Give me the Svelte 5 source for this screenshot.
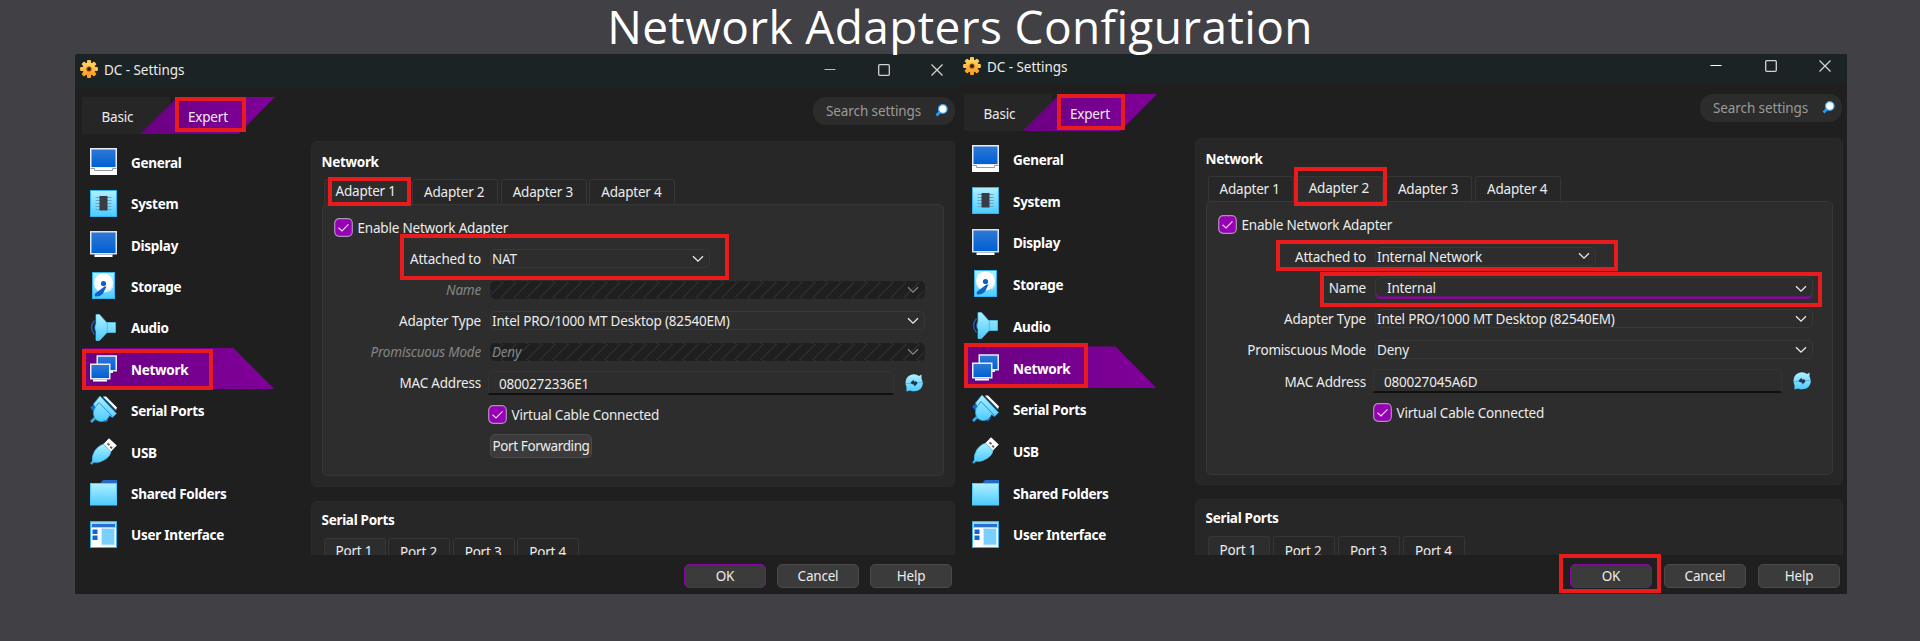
<script>
  const sections = ['General', 'System', 'Display', 'Storage', 'Audio', 'Network', 'Serial Ports', 'USB', 'Shared Folders', 'User Interface'];

  const windows = [
    {
      id: 'first',
      active: 1,
      mac: '0800272336E1',
      forwarding: true,
      rows: [
        { label: 'Attached to', value: 'NAT', kind: 'short' },
        { label: 'Name', value: '', kind: 'disabled' },
        { label: 'Adapter Type', value: 'Intel PRO/1000 MT Desktop (82540EM)', kind: 'wide' },
        { label: 'Promiscuous Mode', value: 'Deny', kind: 'disabled' }
      ]
    },
    {
      id: 'second',
      active: 2,
      mac: '080027045A6D',
      forwarding: false,
      rows: [
        { label: 'Attached to', value: 'Internal Network', kind: 'short' },
        { label: 'Name', value: 'Internal', kind: 'editable' },
        { label: 'Adapter Type', value: 'Intel PRO/1000 MT Desktop (82540EM)', kind: 'wide' },
        { label: 'Promiscuous Mode', value: 'Deny', kind: 'wide' }
      ]
    }
  ];

  // Highlight frames drawn over the windows: x, y, width, height
  const marks = [
    [175, 97, 71, 35],
    [328, 177, 83, 29],
    [400, 234, 329, 46],
    [82, 349, 131, 41],
    [1057, 94, 68, 36],
    [1294, 167, 93, 39],
    [1276, 240, 342, 31],
    [1320, 272, 502, 35],
    [964, 343, 124, 45],
    [1559, 554, 102, 39]
  ];
</script>

{#snippet chevron()}
  <svg class="chevron" viewBox="0 0 12 8" width="12" height="8"><path d="M1 1.2 6 6.2 11 1.2" fill="none" stroke="currentColor" stroke-width="1.3" /></svg>
{/snippet}

{#snippet check()}
  <svg class="check" viewBox="0 0 19 19" width="19" height="19">
    <rect x=".7" y=".7" width="17.6" height="17.6" rx="4.5" fill="#9600b4" stroke="#b08fbb" stroke-width="1.2" />
    <path d="M4.5 9.8 8 13 14.5 6.3" fill="none" stroke="#f0d8f5" stroke-width="1.2" />
  </svg>
{/snippet}

{#snippet icon(name)}
  <svg class="icon" viewBox="0 0 27 27" width="27" height="27">
    {#if name === 'General'}
      <path d="M0 0H27V27H0Z" fill="#e9edf2" />
      <path d="M1.5 1.5H25.5V19H1.5Z" fill="url(#screen)" />
      <path d="M0 20H27V27H0Z" fill="#fff" />
      <path d="M.5 20.5H4.500V22.500H22.500V20.500H26.500" fill="none" stroke="#9a9a9a" />
    {:else if name === 'System'}
      <rect x=".5" y=".5" width="26" height="26" fill="url(#ice)" stroke="#36b3ee" />
      <path d="M5.500 7.500H21.500M5.500 10.500H21.500M5.500 13.500H21.500M5.500 16.500H21.500M5.500 19.500H21.500" stroke="#6fa3b8" stroke-width="1.200" />
      <rect x="9.500" y="6" width="8" height="14.500" fill="#373c47" />
    {:else if name === 'Display'}
      <path d="M0 0H27V23.500H0Z" fill="#dde3ec" />
      <path d="M1.500 1.500H25.500V22H1.500Z" fill="url(#screen)" />
      <path d="M4.500 23.500H22.500V26H4.500Z" fill="#fff" />
    {:else if name === 'Storage'}
      <rect x="2.500" y=".5" width="22" height="26" fill="url(#ice)" stroke="#36b3ee" />
      <circle cx="13.500" cy="11" r="9.500" fill="#fff" />
      <path d="M16.500 14.500 13 21.500Q10 25 5 24.500 4 22 6.500 20.500L14.500 14.500Z" fill="#0b60ca" />
      <circle cx="13.500" cy="11.500" r="2.600" fill="#0b60ca" />
      <path d="M17 16.500 20 18.500 23 14" fill="none" stroke="#c9f2ff" stroke-width="1.500" />
    {:else if name === 'Audio'}
      <path d="M4.500 6.500Q-1.500 13.500 4.500 20.500M6 9.500Q3.500 13.500 6 17" fill="none" stroke="#1b5fb0" stroke-width="1.400" />
      <path d="M6 .5 9.500 .5 17 9V8.500H25.500V18.500H17L9.500 26.500H6V17Q4.500 13.500 6 10Z" fill="url(#ice)" stroke="#55cdf8" stroke-width=".7" />
      <path d="M17.300 9V18.500" stroke="#47bdf3" />
    {:else if name === 'Network'}
      <path d="M6.500 .3H27V16.500H23V18H20V16H6.500Z" fill="#e9edf2" />
      <path d="M8 1.800H25.500V15H8Z" fill="url(#screen)" />
      <path d="M0 8.500H20.500V24.500H0Z" fill="#e9edf2" />
      <path d="M1.500 10H19V23H1.500Z" fill="url(#screen)" />
      <path d="M3 24.500H17V26.500H3Z" fill="#fff" />
    {:else if name === 'Serial Ports'}
      <path d="M1 26 5 22" stroke="#38aef0" stroke-width="2.500" />
      <path d="M0 11.500 4 8.500 6 11 3 15Z" fill="#1168cf" />
      <path d="M13 24 17 21.500 18.500 24 15.500 26.500Z" fill="#1168cf" />
      <path d="M10 0 26.500 17.500 22.500 21.500 19.500 19.500Q17 25.500 10.500 25.500 3.500 24.500 3.500 17 3.500 13 5.500 11.500L3.500 8Z" fill="url(#ice)" stroke="#2ba3e8" stroke-width=".8" />
      <path d="M13 .5 16 .5 27 11.500 26 14Z" fill="#fff" />
      <path d="M6 10.500 9 6.500 22.500 20.500M13 1 26 14.500" fill="none" stroke="#2a8ad8" stroke-width="1" />
    {:else if name === 'USB'}
      <path d="M1 26 5 21.500" stroke="#38aef0" stroke-width="2.300" />
      <path d="M14 7 21 13.500Q20.500 18 15 21.500 9.500 25.500 2.500 24 1.500 18 5 12.500 9 7 14 6Z" fill="url(#ice)" stroke="#48c3f5" stroke-width=".7" />
      <path d="M13.500 6 19 .3 26.800 7.500 21 13.500Z" fill="#fff" />
      <path d="M17.500 5.500 19.500 7M20.300 8.700 22 10.300" stroke="#555" stroke-width="1.800" />
    {:else if name === 'Shared Folders'}
      <path d="M10.500 4 13 1H27V7H8Z" fill="#226bcb" />
      <rect x=".5" y="4.500" width="26" height="21.500" fill="url(#ice)" stroke="#55cbf8" />
    {:else}
      <rect x=".5" y=".5" width="26" height="26" fill="#fff" stroke="#36b3ee" />
      <path d="M1 1H26V7H1Z" fill="#8bddfb" />
      <path d="M2 3H25V6H2Z" fill="#2a6fce" />
      <path d="M2.500 8.500H7.500V13H2.500ZM2.500 14.500H7.500V19H2.500Z" fill="#0d67d8" />
      <rect x="11.500" y="7.500" width="13" height="16.500" fill="#79d0ff" stroke="#c9ebff" />
    {/if}
  </svg>
{/snippet}

<svg class="defs" width="0" height="0" aria-hidden="true">
  <defs>
    <linearGradient id="screen" x1="0" y1="0" x2="0" y2="1"><stop offset="0" stop-color="#2f78d4" /><stop offset="1" stop-color="#0060d4" /></linearGradient>
    <linearGradient id="ice" x1="0" y1="0" x2="0" y2="1"><stop offset="0" stop-color="#b0f0ff" /><stop offset="1" stop-color="#4ccbff" /></linearGradient>
    <linearGradient id="violet" x1="0" y1="0" x2="1" y2="0"><stop offset="0" stop-color="#6b0082" /><stop offset="1" stop-color="#80009a" /></linearGradient>
    <linearGradient id="gold" x1="0" y1="0" x2="0" y2="1"><stop offset="0" stop-color="#ffd76a" /><stop offset="1" stop-color="#ff9d1e" /></linearGradient>
  </defs>
</svg>

<main>
  <h1>Network Adapters Configuration</h1>

  <div class="desk">
    {#each windows as win}
      <section class="window {win.id}">
        <header class="titlebar">
          <svg class="gear" viewBox="-9 -9 18 18" width="18" height="18">
            {#each [0, 45, 90, 135, 180, 225, 270, 315] as angle}
              <rect x="-2" y="-8.900" width="4" height="5" rx="1" fill={angle > 90 && angle < 270 ? '#ffa126' : '#ffc652'} transform="rotate({angle})" />
            {/each}
            <circle r="6.500" fill="url(#gold)" />
            <circle r="2.600" fill="#8b4a12" />
            <circle r="1.500" fill="#241a18" />
          </svg>
          <span class="caption">DC - Settings</span>
          <div class="controls">
            <svg viewBox="0 0 12 12" width="12" height="12"><path d="M.5 5.500H11.500" stroke={win.id === 'second' ? '#fff' : '#b9bdbe'} /></svg>
            <svg viewBox="0 0 12 12" width="12" height="12"><rect x=".7" y=".7" width="10.600" height="10.600" rx="1" fill="none" stroke="#d0d3d3" stroke-width="1.300" /></svg>
            <svg viewBox="0 0 12 12" width="12" height="12"><path d="M.5 .5 11.500 11.500M11.500 .5 .5 11.500" stroke="#d6d8d8" stroke-width="1.200" /></svg>
          </div>
        </header>

        <div class="toolbar">
          <div class="modes">
            <svg viewBox="0 0 193 37" width="193" height="37"><path d="M58.500 37 96 0H193L156.500 37Z" fill="url(#violet)" /></svg>
            <span class="basic">Basic</span>
            <span class="expert">Expert</span>
          </div>
          <div class="search">
            <span>Search settings</span>
            <svg viewBox="0 0 13 13" width="13" height="13"><path d="M1.500 11.500 5 8" stroke="#2b9df0" stroke-width="2.600" /><circle cx="7.800" cy="5" r="4.300" fill="#fff" stroke="#3ba3f5" stroke-width="1.300" /></svg>
          </div>
        </div>

        <div class="body">
          <nav>
            {#each sections as name}
              <div class="item" class:selected={name === 'Network'}>{@render icon(name)}<span>{name}</span></div>
            {/each}
          </nav>

          <div class="content">
            <div class="panel network">
              <h2>Network</h2>
              <div class="tabs">
                {#each [1, 2, 3, 4] as n}
                  <div class="tab" class:active={n === win.active}>Adapter {n}</div>
                {/each}
              </div>
              <div class="page">
                <div class="enable">{@render check()}<span>Enable Network Adapter</span></div>
                <div class="form">
                  {#each win.rows as row}
                    <div class="row" class:dim={row.kind === 'disabled'}>
                      <span class="label">{row.label}</span>
                      <div class="combo {row.kind}"><span>{row.value}</span>{@render chevron()}</div>
                    </div>
                  {/each}
                  <div class="row">
                    <span class="label">MAC Address</span>
                    <div class="mac"><span>{win.mac}</span></div>
                    <svg class="refresh" viewBox="0 0 18 18" width="18" height="18">
                      <path d="M.5 9A8.500 8.500 0 0 1 14 2L16.500 .5V4.500Q19.500 11 15.500 15 11 18.800 5 16.500L1.500 17.500 1.500 13Q.5 11 .5 9Z" fill="url(#ice)" />
                      <path d="M1 9.500H6M12 8.500H17" fill="none" stroke="#5bb4ea" />
                      <path d="M5.500 8.500 8.500 5.800 9 7.500Q12 6.500 12.500 9.500L9.500 12.500 9 10.500Q6.500 11 5.500 8.500Z" fill="#23384d" />
                    </svg>
                  </div>
                  <div class="row cable">{@render check()}<span>Virtual Cable Connected</span></div>
                  {#if win.forwarding}
                    <div class="row"><button class="forward">Port Forwarding</button></div>
                  {/if}
                </div>
              </div>
            </div>

            <div class="panel serial">
              <h2>Serial Ports</h2>
              <div class="tabs ports">
                {#each [1, 2, 3, 4] as n}
                  <div class="tab" class:active={n === 1}>Port {n}</div>
                {/each}
              </div>
            </div>
          </div>
        </div>

        <footer>
          <button class="primary">OK</button>
          <button>Cancel</button>
          <button>Help</button>
        </footer>
      </section>
    {/each}
  </div>

  {#each marks as [x, y, w, h]}
    <div class="mark" style="left:{x}px;top:{y}px;width:{w}px;height:{h}px"></div>
  {/each}
</main>

<style>
  :global(body) { margin: 0; background: #414045; }
  * { box-sizing: border-box; }
  .defs { position: absolute; }
  main {
    position: relative;
    width: 1920px;
    height: 641px;
    overflow: hidden;
    background: #414045;
    color: #ececec;
    font: 13.5px/20px "Noto Sans", "Open Sans", sans-serif;
    letter-spacing: -0.2px;
    white-space: nowrap;
  }
  svg { display: block; flex: none; }
  h1 {
    position: relative;
    z-index: 1;
    height: 54px;
    margin: 0;
    color: #fff;
    font: 400 46px/52px "Open Sans", sans-serif;
    letter-spacing: 0.38px;
    text-align: center;
  }
  .desk { display: flex; padding-left: 75px; }

  .window {
    display: flex;
    flex-direction: column;
    height: 540px;
    background: #1f1f1f;
    flex: none;
  }
  .first {
    --bar: 33px; --tool: 54px; --tabs-x: 7px; --nav: 236px; --pitch: 41.38px; --body: 414px;
    --panel: 643.5px; --tab-gap: 2.6px; --label: 158.5px; --row: 31.1px; --form-top: 5.5px;
    --wide: 435px; --mac: 406px; --short: 220px;
    width: 885px;
    border-top-left-radius: 3px;
  }
  .second {
    --bar: 29px; --tool: 55px; --tabs-x: 4px; --nav: 235px; --pitch: 41.7px; --body: 417px;
    --panel: 648px; --tab-gap: 3.2px; --label: 159.5px; --row: 31.25px; --form-top: 6px;
    --wide: 438px; --mac: 409px; --short: 221px;
    width: 887px;
  }

  .titlebar {
    display: flex;
    align-items: center;
    height: var(--bar);
    padding: 0 17px 3px 5px;
    background: #1c2324;
    border-radius: inherit;
    letter-spacing: -0.05px;
  }
  .second .titlebar { padding: 0 16px 5px 3px; }
  .caption { margin-left: 6px; padding-top: 1px; }
  .controls { display: flex; gap: 41.5px; margin-left: auto; padding-top: 1px; }
  .second .controls { gap: 42.5px; padding-top: 0; }

  .toolbar { display: flex; justify-content: space-between; height: var(--tool); padding: 10px 5px 0 var(--tabs-x); }
  .second .toolbar { padding-top: 11px; }
  .modes { display: grid; width: 193px; height: 37px; background: linear-gradient(90deg, #262626 0 88px, transparent 88px); }
  .modes > * { grid-area: 1 / 1; }
  .basic { padding: 10px 0 0 19.500px; }
  .expert { padding: 10px 0 0 106px; }
  .search {
    display: flex;
    align-items: center;
    justify-content: space-between;
    width: 142px;
    height: 28px;
    padding: 0 7px 0 13px;
    border-radius: 13px;
    background: #2c2c2c;
    color: #9a9a9a;
    letter-spacing: -0.1px;
  }
  .search svg { margin-top: -2px; }

  .body { display: flex; height: var(--body); }
  nav { width: var(--nav); padding-left: 7.500px; }
  .second nav { padding-left: 4.500px; }
  .item { display: flex; align-items: center; gap: 14px; height: var(--pitch); padding-left: 7.500px; color: #fff; font-weight: 700; letter-spacing: -0.28px; }
  .item span { padding-top: 2.500px; }
  .selected { width: 193px; background: linear-gradient(90deg, #6b0082, #80009a); clip-path: polygon(0 0, 151px 0, 192px 100%, 0 100%); }

  .content { display: flex; flex-direction: column; gap: 14px; width: var(--panel); overflow: hidden; }
  .panel { flex: none; padding: 14px 10.500px 0 9.500px; border: 1px solid #2a2a2a; border-radius: 6px; background: #272727; }
  .network { height: 345.500px; }
  .second .network { height: 347px; }
  .serial { height: 90px; }
  .panel h2 { height: 23px; margin: -5px 0 5px; color: #fff; font: 700 13.500px/23px "Noto Sans", sans-serif; letter-spacing: -0.3px; }
  .serial h2 { margin: -7px 0 6px; }
  .tabs { display: flex; gap: var(--tab-gap); height: 24.500px; padding-left: 2px; }
  .tab { width: 86px; height: 24.500px; padding: 2px 0 0 11px; border: 1px solid #363636; border-bottom: 0; border-radius: 3px 3px 0 0; background: #272727; }
  .tab.active { padding-top: 1px; background: #2d2d2d; }
  .ports .tab { width: 62px; height: 30px; padding-top: 3.500px; }
  .ports .tab.active { padding-top: 2.500px; }
  .page { width: 622px; height: 272.500px; margin: 0; padding-top: 13px; border: 1.500px solid #373737; border-radius: 5px; background: #2d2d2d; }
  .second .page { width: 627px; height: 274px; }
  .enable { display: flex; align-items: center; gap: 5px; height: 20px; padding-left: 11px; }
  .enable span, .cable span { padding-top: 1px; }

  .form { padding-top: var(--form-top); }
  .row { display: flex; align-items: center; height: var(--row); }
  .label { width: var(--label); padding-top: 1px; text-align: right; margin-right: 9px; }
  .combo { display: flex; align-items: center; justify-content: space-between; width: var(--wide); height: 19px; padding: 0 5px 0 1px; border: 1px solid #383838; border-radius: 5px; }
  .combo span { padding-top: 1px; }
  .combo.short { width: var(--short); }
  .combo.editable { height: 22px; padding-left: 11px; border-bottom: 0; box-shadow: inset 0 -2.500px #830b99; margin-top: 2px; }
  .combo.editable span { padding-top: 0; margin-top: -2px; }
  .combo.disabled {
    height: 18px;
    border-color: transparent;
    background: repeating-linear-gradient(135deg, #1f1f1f 0 8px, #2d2d2d 8px 9.200px);
  }
  .dim { color: #858585; font-style: italic; }
  .mac { width: var(--mac); height: 24px; margin-left: -2px; padding: 1px 0 0 10px; border: 1px solid #333; border-bottom: 2px solid #101010; border-radius: 4px 4px 0 0; line-height: 22px; }
  .refresh { margin-left: 10.500px; }
  .cable { gap: 5px; padding-left: calc(var(--label) + 6.500px); }

  button {
    width: 82px;
    height: 24px;
    padding: 0;
    border: 1px solid #4a4a4a;
    border-radius: 5px;
    background: #3b3b3b;
    color: #ececec;
    font: inherit;
    line-height: 20px;
    letter-spacing: inherit;
  }
  .forward { width: 102px; margin: 2px 0 0 calc(var(--label) + 9px); letter-spacing: -0.4px; }
  footer { display: flex; justify-content: flex-end; gap: 11px; height: 39px; padding: 9px 8px 0 0; }
  .second footer { gap: 12px; padding-right: 7px; }
  .primary { border: 1.500px solid #8a05a5; }

  .mark { position: absolute; border: 4.500px solid #e81c1c; z-index: 2; }
</style>
